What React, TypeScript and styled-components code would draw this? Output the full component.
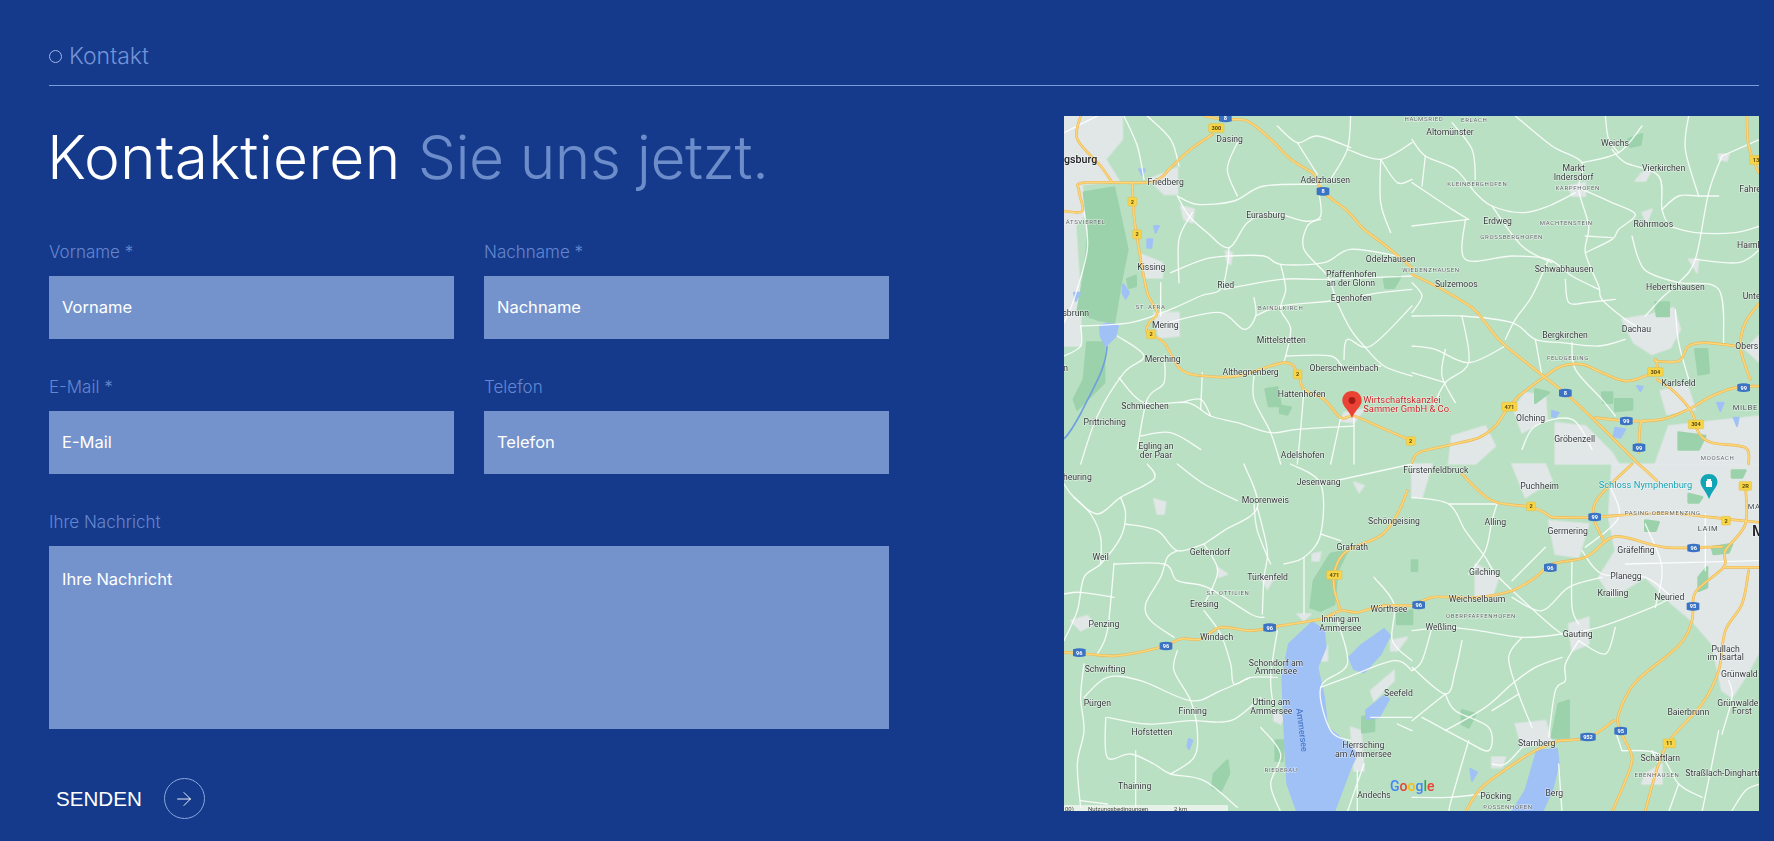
import React from 'react'
import styled, { createGlobalStyle } from 'styled-components'
import { ArrowRight } from 'lucide-react'

const GlobalStyle = createGlobalStyle`
  html, body {
    margin: 0;
    padding: 0;
    background: #153a8b;
    overflow: hidden;
  }
  * {
    box-sizing: border-box;
  }
`

const Page = styled.div`
  width: 1774px;
  height: 841px;
  padding: 37px 15px 0 49px;
  background: #153a8b;
  font-family: Inter, 'Liberation Sans', sans-serif;
`

const SectionHead = styled.div`
  display: flex;
  align-items: center;
  gap: 7px;
  height: 49px;
  padding-bottom: 10px;
  border-bottom: 1px solid #7d9cdb;
  color: #7393d6;
  font-size: 23px;
  font-weight: 300;
`

const Dot = styled.span`
  width: 13px;
  height: 13px;
  border: 1px solid #9db6e6;
  border-radius: 50%;
`

const Content = styled.div`
  display: flex;
  justify-content: space-between;
  margin-top: 30px;
`

const Form = styled.form`
  width: 840px;
`

const Title = styled.h1`
  margin: 0 0 36px -2px;
  padding-top: 5px;
  height: 88px;
  font-size: 60.5px;
  line-height: 72px;
  font-weight: 350;
  letter-spacing: 0.25px;
  color: #fff;
  white-space: nowrap;
  span {
    color: #6d8dca;
    letter-spacing: -0.6px;
  }
`

const Fields = styled.div`
  display: grid;
  grid-template-columns: 405px 405px;
  column-gap: 30px;
  row-gap: 36px;
`

const Field = styled.label<{ $wide?: boolean }>`
  display: block;
  grid-column: ${(p) => (p.$wide ? '1 / 3' : 'auto')};
`

const FieldLabel = styled.div`
  height: 24px;
  margin-bottom: 12px;
  color: #6587cf;
  font-size: 17px;
  font-weight: 300;
  line-height: 24px;
`

const Input = styled.input`
  display: block;
  width: 100%;
  height: 63px;
  padding: 0 13px 2px;
  border: 0;
  border-radius: 0;
  background: #7493cc;
  font-family: inherit;
  font-size: 16.5px;
  color: #fff;
  &::placeholder {
    color: #fff;
    opacity: 1;
  }
`

const TextArea = styled.textarea`
  display: block;
  width: 100%;
  height: 183px;
  padding: 21px 13px;
  border: 0;
  border-radius: 0;
  background: #7493cc;
  font-family: inherit;
  font-size: 16.5px;
  line-height: 24px;
  color: #fff;
  resize: none;
  &::placeholder {
    color: #fff;
    opacity: 1;
  }
`

const SendButton = styled.button`
  display: flex;
  align-items: center;
  gap: 22px;
  margin-top: 49px;
  padding: 0 0 0 7px;
  border: 0;
  background: none;
  color: #fff;
  font-family: 'Liberation Sans', sans-serif;
  font-size: 20.6px;
`

const ArrowCircle = styled.span`
  display: flex;
  align-items: center;
  justify-content: center;
  width: 41px;
  height: 41px;
  border: 1px solid #8aa6de;
  border-radius: 50%;
`

const MapFrame = styled.div`
  width: 695px;
  height: 695px;
  flex: none;
  overflow: hidden;
  background: #bae0c3;
`

const MapSvg = styled.svg`
  display: block;
  width: 695px;
  height: 695px;
  filter: blur(0.45px);
  font-family: Roboto, 'Liberation Sans', sans-serif;
`

const labelStyles: Record<string, { size: number; weight?: number; spacing?: number; fill: string; start?: boolean }> = {
  town: { size: 26, fill: '#33373a' },
  start: { size: 26, fill: '#33373a', start: true },
  area: { size: 18, spacing: 2, fill: '#5f6468' },
  district: { size: 23, spacing: 2, fill: '#4b5054' },
  districtStart: { size: 23, spacing: 2, fill: '#4b5054', start: true },
  poi: { size: 28, fill: '#c5221f', start: true },
  teal: { size: 28, fill: '#129eaf', start: true },
  big: { size: 32, weight: 500, fill: '#202124' },
  city: { size: 46, weight: 500, fill: '#202124' },
}

const Label = styled.text<{ $kind: string }>`
  font-size: ${(p) => labelStyles[p.$kind].size}px;
  font-weight: ${(p) => labelStyles[p.$kind].weight || 400};
  letter-spacing: ${(p) => labelStyles[p.$kind].spacing || 0}px;
  fill: ${(p) => labelStyles[p.$kind].fill};
  text-anchor: ${(p) => (labelStyles[p.$kind].start ? 'start' : 'middle')};
  paint-order: stroke;
  stroke: rgba(255, 255, 255, 0.65);
  stroke-width: 3px;
`

const ShieldText = styled.text`
  font-size: 17px;
  font-weight: 700;
  text-anchor: middle;
`

type LabelRow = [string, number, number, string?]
type ShieldRow = [string, number, number, 'y' | 'b']

interface Tile {
  ox: number
  oy: number
  urban: string[]
  forest: string[]
  water: string[]
  roads: string[]
  highways: string[]
  shields: ShieldRow[]
  labels: LabelRow[]
}

// coordinates are read off 3x crops of the map, one crop per quadrant
const tiles: Tile[] = [
  {
    ox: 0,
    oy: 0,
    urban: [
      '0,0 175,0 175,70 125,130 165,195 55,205 60,300 35,330 50,560 50,690 0,690',
      '255,190 340,155 340,235 300,235',
      '270,590 345,590 345,660 285,665',
      '230,415 295,440 295,485 245,485',
      '350,270 390,280 385,320 360,310',
      '485,405 505,410 500,445 490,440',
      '840,890 900,880 870,920 830,915',
    ],
    forest: [
      '60,230 150,215 190,400 170,500 150,620 100,610 40,590 60,480 75,340',
      '70,680 120,680 120,800 40,880 30,850 60,790',
      '605,820 640,815 650,870 615,870',
      '650,870 680,875 670,895 648,890',
      '960,490 1010,480 990,515 965,515',
      '190,490 215,480 215,510 195,515',
    ],
    water: [
      '108,630 130,622 162,630 155,660 125,690 110,660',
      '178,505 195,530 185,548 175,530',
      '270,330 285,330 275,350',
      '250,370 265,370 262,395 250,395',
      '225,160 242,160 235,178',
      '30,530 48,530 35,555',
    ],
    roads: [
      '180,0 220,90 240,190',
      '250,0 320,70 345,150',
      '340,240 400,265 510,255 600,210 770,205',
      '340,240 375,300 430,350 495,395 550,320 620,290 720,315 770,310',
      '495,395 490,450 470,520 410,540 320,580 200,620 50,630',
      '320,470 420,430 495,420 600,420 650,445 780,440 860,400 1000,420',
      '480,520 650,490 780,490 1044,480',
      '650,445 665,520 650,580 680,640 660,740',
      '570,545 575,600 540,640 470,590 350,610 280,630',
      '575,600 650,570 800,555 950,530 1044,520',
      '765,230 770,300 730,330 720,400 790,480 820,560 860,640 900,690 960,750 1044,780',
      '860,0 850,100 800,190',
      '950,130 1000,200 1044,190',
      '850,100 950,130 1044,80',
      '520,80 490,160 520,240',
      '950,130 950,260 980,350',
      '160,660 240,720 180,770 100,900 50,1044',
      '300,720 300,800 250,850 220,1000',
      '165,785 240,860 370,860 440,900 520,920 620,950 700,940 870,930',
      '350,860 410,850 440,900',
      '570,780 570,850 620,950 650,1044',
      '720,820 710,940 700,1044',
      '870,900 870,1044',
      '830,905 800,1044',
      '665,720 800,720 850,760 950,750',
      '840,730 850,670 920,690 1044,570',
      '0,720 50,690 50,630',
      '60,285 70,400 30,550 0,620',
      '415,770 410,880',
      '230,960 320,950 410,1000',
      '385,290 345,370 345,500',
      '290,500 290,600',
      '640,30 700,80 760,60 860,95',
      '700,80 760,175',
      '0,50 60,20 100,0',
    ],
    highways: [
      '420,0 480,10 550,15 620,70 680,130 750,175 775,225 850,285 900,340 960,385 1044,455',
      '445,55 380,100 320,155 290,185 240,200 60,200 45,225 55,285 0,285',
      '205,200 210,300 225,400 250,530 280,590 255,620 250,650 300,680 350,760 420,780 520,780 660,740 700,770 720,820 780,850 830,905 870,900 940,930 1044,975',
      '50,0 40,70 110,150 145,200',
    ],
    shields: [
      ['300', 457, 36, 'y'],
      ['8', 484, 6, 'b'],
      ['8', 777, 226, 'b'],
      ['2', 205, 257, 'y'],
      ['2', 219, 355, 'y'],
      ['2', 261, 655, 'y'],
      ['2', 701, 775, 'y'],
      ['2', 1040, 975, 'y'],
    ],
    labels: [
      ['gsburg', 50, 140, 'big'],
      ['Friedberg', 305, 207],
      ['Dasing', 497, 79],
      ['Adelzhausen', 784, 202],
      ['Eurasburg', 605, 305],
      ['ÄTSVIERTEL', 65, 325, 'area'],
      ['Kissing', 262, 461],
      ['Ried', 485, 517],
      ['Odelzhausen', 980, 437],
      ['Pfaffenhofen', 862, 483],
      ['an der Glonn', 860, 509],
      ['Egenhofen', 862, 554],
      ['BAINDLKIRCH', 650, 581, 'area'],
      ['ST. AFRA', 260, 578, 'area'],
      ['sbrunn', 35, 600],
      ['Mering', 304, 637],
      ['Mittelstetten', 652, 680],
      ['Merching', 296, 738],
      ['Althegnenberg', 560, 778],
      ['Oberschweinbach', 840, 766],
      ['Hattenhofen', 713, 842],
      ['Schmiechen', 243, 879],
      ['Prittriching', 122, 927],
      ['Egling an', 276, 999],
      ['der Paar', 276, 1025],
      ['Adelshofen', 716, 1027],
      ['n', 5, 764],
      ['Wirtschaftskanzlei', 898, 860, 'poi'],
      ['Sammer GmbH & Co.', 898, 889, 'poi'],
    ],
  },
  {
    ox: 348,
    oy: 0,
    urban: [
      '630,610 720,595 785,575 805,640 775,695 720,715 665,680',
      '745,825 825,805 850,880 765,895',
      '770,930 1044,900 1044,1044 730,1044',
      '305,880 340,830 400,840 405,910 330,950',
      '430,920 520,930 600,1010 620,1044 430,1044',
      '120,960 220,930 250,990 190,1044 110,1044',
      '690,170 720,160 700,195 670,195',
      '690,290 720,280 705,320',
      '920,115 950,115 945,135 920,130',
      '830,430 860,430 855,470',
      '470,210 520,200 520,240 480,240',
      '1040,660 1044,740 1000,700',
    ],
    forest: [
      '650,70 690,55 685,85 655,92',
      '850,700 885,700 890,770 860,775',
      '730,560 770,560 770,600 735,600',
      '570,830 600,830 600,860 575,860',
      '610,850 660,850 660,880 610,885',
      '370,820 410,830 370,860',
      '800,950 880,960 860,1000 800,1000',
    ],
    water: [
      '420,885 440,890 430,905 420,900',
      '610,935 640,940 625,965 605,960',
      '915,860 935,860 925,885',
      '965,905 980,905 975,930',
      '675,810 692,812 685,825',
    ],
    roads: [
      '0,70 40,120 130,160 190,230 240,270 330,290 410,270 490,230',
      '40,120 30,210',
      '0,200 60,240 120,280 170,310',
      '170,310 0,330',
      '120,20 180,100 190,190',
      '310,0 420,90 510,140 500,220 530,330 520,410 560,510 570,550 640,610 690,640',
      '690,30 620,110 510,140',
      '600,100 640,140 740,180 750,280 770,330',
      '830,0 820,100 860,240',
      '930,120 1044,70',
      '930,120 890,230 850,430 800,500 750,545 700,600',
      '510,220 600,260 670,295 620,340 600,370 520,410',
      '160,310 160,430 300,420 410,430 480,480 560,520',
      '240,270 330,390 420,440',
      '410,430 360,540 310,610 280,670',
      '460,490 470,560 520,560',
      '520,560 610,550',
      '660,360 680,430 710,470 800,500 920,520 935,680',
      '850,430 980,440 1044,400',
      '0,600 150,600 300,620 370,670 450,680 560,690 640,670',
      '150,600 170,740 100,800 60,880',
      '0,690 70,700 170,740 280,690',
      '370,670 390,780',
      '480,680 490,760 570,850 610,900',
      '100,700 90,780 130,860',
      '770,330 850,350 970,350 1044,330',
      '0,500 30,540 0,590',
      '580,0 590,70 620,110',
      '750,280 800,240 860,240 920,240',
      '790,580 800,680 830,790',
      '0,770 100,800',
      '520,360 600,365',
      '540,1000 480,910 370,930 330,1000',
    ],
    highways: [
      '0,475 90,520 180,575 220,620 270,680 400,785 470,840 550,915 680,1044',
      '320,840 400,780 450,750 510,745 570,770 640,795 700,780 735,755 730,730',
      '730,735 800,735 830,690 880,680 970,690',
      '0,1040 20,1010 100,990 200,965 250,930 285,880 320,840',
      '550,905 650,915 750,910 830,880 900,840 970,815 1044,810',
      '680,1010 685,925 700,915',
      '735,790 790,830 840,890 860,950 900,980 1000,995 1010,1044',
      '1005,0 1010,90 1040,170',
      '1044,560 1000,620 985,690 1000,750 1015,790',
    ],
    shields: [
      ['13', 1032, 132, 'y'],
      ['8', 460, 831, 'b'],
      ['471', 292, 872, 'y'],
      ['304', 730, 768, 'y'],
      ['304', 852, 925, 'y'],
      ['99', 995, 815, 'b'],
      ['99', 643, 915, 'b'],
      ['99', 681, 995, 'b'],
    ],
    labels: [
      ['HALMSRIED', 36, 14, 'area'],
      ['ERLACH', 187, 18, 'area'],
      ['Altomünster', 114, 58],
      ['Weichs', 609, 91],
      ['Markt', 485, 165],
      ['Indersdorf', 485, 191],
      ['Vierkirchen', 755, 165],
      ['KLEINBERGHOFEN', 196, 211, 'area'],
      ['KARPFHOFEN', 497, 223, 'area'],
      ['Fahre', 982, 227, 'start'],
      ['Erdweg', 257, 323],
      ['MACHTENSTEIN', 463, 327, 'area'],
      ['Röhrmoos', 724, 332],
      ['GROSSBERGHOFEN', 299, 370, 'area'],
      ['Haiml', 975, 395, 'start'],
      ['Schwabhausen', 456, 467],
      ['WIEDENZHAUSEN', 57, 469, 'area'],
      ['Sulzemoos', 133, 513],
      ['Hebertshausen', 790, 522],
      ['Unte', 992, 549, 'start'],
      ['Dachau', 673, 648],
      ['Bergkirchen', 459, 667],
      ['Obers', 970, 699, 'start'],
      ['FELDGEDING', 468, 733, 'area'],
      ['Karlsfeld', 800, 809],
      ['Olching', 356, 914],
      ['MILBE', 962, 883, 'districtStart'],
      ['Gröbenzell', 488, 978],
      ['MOOSACH', 917, 1032, 'area'],
    ],
  },
  {
    ox: 0,
    oy: 348,
    urban: [
      '20,470 70,455 90,480 50,500',
      '270,105 305,115 300,150 280,150',
      '870,55 900,65 885,85',
      '745,270 770,265 765,290 745,290',
      '460,310 490,330 465,340',
      '590,340 630,340 610,375',
      '700,450 740,450 720,470',
      '770,560 790,545 790,590 765,590',
      '920,680 990,620 990,650 930,710',
      '980,530 1030,520 1000,560 980,560',
      '860,790 890,800 900,920 870,920',
      '630,740 660,760 650,780 630,770',
    ],
    forest: [
      '800,270 850,260 820,320 810,420 770,440 740,430 750,350',
      '450,930 490,890 495,930 470,980 445,970',
      '1000,450 1044,440 1044,480 1000,480',
      '895,760 930,750 930,800 895,805',
      '635,830 660,830 655,890 635,890',
    ],
    water: [
      '745,475 780,500 785,550 760,610 780,700 790,790 840,830 880,870 860,910 810,1044 700,1044 670,960 660,770 655,640 675,540',
      '960,495 978,515 950,570 900,625 870,615 855,580 890,545',
      '960,695 975,705 945,760 910,765 905,740',
      '375,825 385,830 375,855 370,845',
    ],
    roads: [
      '250,0 270,45 170,100 100,150 30,100 0,60',
      '170,100 185,150 170,220 110,300 60,340 40,440 0,530',
      '30,100 80,150 110,220 110,300',
      '185,180 280,200 340,260 420,240',
      '540,0 580,130 480,200 420,240',
      '580,130 610,260 600,340 595,450',
      '420,240 460,310 450,360 420,420',
      '340,260 310,280 290,340 245,420 260,470 330,520',
      '150,300 300,300 340,350 430,370 560,450 600,460',
      '150,300 130,500 100,570',
      '0,390 50,385 150,400',
      '420,440 470,510 500,600 510,660 560,640 640,640',
      '340,560 330,620 380,710 400,800 390,880 320,930',
      '60,600 50,700 60,800 40,900 50,1030',
      '60,700 130,640 230,650 380,710 470,680 560,640',
      '130,760 250,780 380,770 500,770 590,700',
      '125,760 130,880 200,870 270,900 320,930 420,950 520,1030',
      '215,860 215,1030',
      '590,790 650,870 620,960 650,1044',
      '680,0 770,60 770,210 720,280 660,300',
      '570,120 580,200 620,300',
      '340,0 420,60 520,110',
      '770,60 1044,0',
      '770,210 830,230',
      '720,280 720,450',
      '820,470 850,600 770,670 800,800 860,830',
      '770,670 850,640 990,590 1044,620',
      '930,340 990,420 985,530 1044,590',
      '920,760 1044,760',
      '880,920 880,1040',
      '850,1044 900,900',
      '1000,780 1044,800',
      '640,500 620,640 630,740',
      '50,1010 130,1020',
    ],
    highways: [
      '0,565 70,570 160,575 290,550 350,525 410,525 470,490 560,500 650,485 770,465 830,440 880,445 960,425 1044,425',
      '1030,80 1000,150 950,215 850,260 815,310 810,370 828,435',
    ],
    shields: [
      ['96', 46, 566, 'b'],
      ['96', 306, 546, 'b'],
      ['96', 617, 491, 'b'],
      ['471', 811, 333, 'y'],
    ],
    labels: [
      ['heuring', 40, 49],
      ['Jesenwang', 764, 62],
      ['Moorenweis', 604, 116],
      ['Schöngeising', 912, 179, 'start'],
      ['Grafrath', 865, 258],
      ['Geltendorf', 438, 274],
      ['Weil', 110, 289],
      ['Türkenfeld', 611, 349],
      ['ST. OTTILIEN', 492, 392, 'area'],
      ['Eresing', 421, 428],
      ['Penzing', 120, 490],
      ['Windach', 458, 529],
      ['Wörthsee', 975, 445],
      ['Inning am', 829, 475],
      ['Ammersee', 829, 500],
      ['Schondorf am', 636, 605],
      ['Ammersee', 636, 631],
      ['Schwifting', 123, 624],
      ['Utting am', 622, 723],
      ['Ammersee', 622, 749],
      ['Pürgen', 100, 726],
      ['Finning', 386, 750],
      ['Hofstetten', 264, 812],
      ['Herrsching', 898, 853],
      ['am Ammersee', 898, 879],
      ['RIEDERAU', 651, 925, 'area'],
      ['Thaining', 212, 976],
      ['Andechs', 930, 1002],
      ['Seefeld', 960, 696, 'start'],
      ['Fürstenfeldbruck', 1018, 26, 'start'],
    ],
  },
  {
    ox: 348,
    oy: 348,
    urban: [
      '600,0 1044,0 1044,560 1000,640 960,700 930,680 900,540 840,470 780,420 700,340 600,400 560,340 610,260 590,160',
      '300,0 400,0 420,50 340,100',
      '410,170 530,180 500,280 430,270',
      '190,300 260,340 240,400 190,400',
      '470,480 530,460 530,540 480,560',
      '0,0 60,0 30,100 0,100',
      '310,780 400,770 420,830 330,850',
      '240,880 280,880 270,910 240,910',
      '700,930 750,900 750,960 690,960',
    ],
    forest: [
      '440,720 470,710 470,820 420,820',
      '150,740 190,750 170,790 150,780',
      '0,290 15,290 15,320 0,320',
      '860,340 885,310 885,370 860,380',
      '830,90 870,100 860,115 830,115',
      '900,250 960,240 950,265 905,270',
      '700,170 740,175 730,200 700,200',
      '960,20 1000,20 990,40 960,40',
    ],
    water: [
      '375,860 435,855 440,900 420,980 390,1044 300,1044 340,980',
      '175,915 195,925 180,950',
    ],
    roads: [
      '0,100 110,120 160,200 220,280 260,340 400,470 450,510',
      '110,120 250,120',
      '255,120 240,170 220,260 170,330',
      '0,500 100,490 200,500 330,520 450,510 560,490 720,430 780,400',
      '300,400 390,440 470,370 570,340',
      '480,290 480,430 500,480',
      '400,250 300,350',
      '510,260 570,330 700,340 780,400',
      '500,530 580,570 610,490',
      '330,520 290,580 320,690 360,790',
      '500,530 460,600 460,650 430,680 410,820',
      '450,580 370,610 300,660 220,730 100,800',
      '150,530 130,620 100,690 0,610',
      '100,690 130,740 230,790 230,860 160,830 30,760',
      '100,690 0,770',
      '60,490 30,590 0,620',
      '320,690 240,740',
      '170,830 120,1000 110,1044',
      '330,850 280,900 240,900',
      '630,860 740,870 800,960 870,1000',
      '800,960 770,1044',
      '920,800 900,900 870,1044',
      '950,650 960,700 930,810',
      '720,860 740,900',
      '610,800 630,860',
      '440,900 450,1044',
      '0,1000 110,1000 210,990',
      '640,300 1044,290',
      '700,180 750,310 730,430',
      '880,150 880,320',
      '960,1040 1000,980 1044,960',
      '590,60 620,160 520,250',
    ],
    highways: [
      '0,425 60,400 120,400 200,400 300,380 370,340 420,300 520,280 590,225 640,220 760,250 930,248',
      '660,0 560,100 545,160 575,230',
      '735,50 680,0',
      '420,160 540,160 680,150 800,150 940,165 1044,175',
      '150,30 240,110 360,130 420,160',
      '1000,60 1000,180 940,260 935,310 850,385 840,470 800,545 670,655 620,750 625,800 660,880 640,950 600,1044',
      '440,830 530,820 605,770',
      '160,1044 210,970 320,890 370,860 440,830',
      '935,310 1044,310',
      '1010,320 990,420 940,500 920,620 870,720 780,820 740,900 700,1040',
    ],
    shields: [
      ['96', 20, 423, 'b'],
      ['96', 415, 311, 'b'],
      ['96', 845, 252, 'b'],
      ['99', 548, 159, 'b'],
      ['95', 843, 427, 'b'],
      ['952', 528, 819, 'b'],
      ['95', 626, 801, 'b'],
      ['2', 357, 127, 'y'],
      ['2', 942, 170, 'y'],
      ['2R', 1000, 66, 'y'],
      ['11', 772, 838, 'y'],
    ],
    labels: [
      ['Puchheim', 383, 76],
      ['Schloss Nymphenburg', 560, 71, 'teal'],
      ['Alling', 250, 182],
      ['Germering', 467, 209],
      ['PASING-OBERMENZING', 752, 152, 'area'],
      ['LAIM', 888, 200, 'district'],
      ['MA', 1007, 136, 'districtStart'],
      ['M', 1040, 215, 'city'],
      ['Gräfelfing', 672, 268],
      ['Gilching', 218, 332],
      ['Planegg', 642, 344],
      ['Krailling', 603, 397],
      ['Neuried', 772, 407],
      ['Weichselbaum', 195, 413],
      ['OBERPFAFFENHOFEN', 207, 463, 'area'],
      ['Weßling', 87, 497],
      ['Gauting', 497, 519],
      ['Pullach', 941, 563],
      ['im Isartal', 941, 589],
      ['Grünwald', 982, 639],
      ['Grünwalder', 982, 725],
      ['Forst', 990, 750],
      ['Baierbrunn', 829, 752],
      ['Starnberg', 374, 847],
      ['Schäftlarn', 745, 892],
      ['EBENHAUSEN', 735, 940, 'area'],
      ['Straßlach-Dinghartin', 820, 935, 'start'],
      ['Pöcking', 251, 1005],
      ['Berg', 427, 996],
      ['POSSENHOFEN', 288, 1035, 'area'],
    ],
  },
]

// Catmull-Rom through the points, so the roads don't look like polylines
const smooth = (line: string) => {
  const pts = line.split(' ').map((p) => p.split(',').map(Number))
  let d = `M${pts[0][0]} ${pts[0][1]}`
  for (let i = 0; i < pts.length - 1; i++) {
    const a = pts[i - 1] || pts[i]
    const b = pts[i]
    const c = pts[i + 1]
    const e = pts[i + 2] || c
    d += `C${b[0] + (c[0] - a[0]) / 6} ${b[1] + (c[1] - a[1]) / 6} ${c[0] - (e[0] - b[0]) / 6} ${c[1] - (e[1] - b[1]) / 6} ${c[0]} ${c[1]}`
  }
  return d
}

const Layer = ({ draw }: { draw: (tile: Tile) => React.ReactNode }) => (
  <>
    {tiles.map((tile) => (
      <g key={`${tile.ox}-${tile.oy}`} transform={`translate(${tile.ox} ${tile.oy}) scale(${1 / 3})`}>
        {draw(tile)}
      </g>
    ))}
  </>
)

const Shield = ({ row }: { row: ShieldRow }) => {
  const [text, x, y, type] = row
  const w = text.length > 2 ? 46 : text.length > 1 ? 38 : type === 'y' ? 26 : 38
  const h = 26
  return (
    <g>
      {type === 'y' ? (
        <rect x={x - w / 2} y={y - h / 2} width={w} height={h} rx={3} fill="#f7d548" stroke="#e6b93c" strokeWidth={1.5} />
      ) : (
        <path
          d={`M${x - w / 2} ${y - h / 2 + 3}Q${x} ${y - h / 2 - 3} ${x + w / 2} ${y - h / 2 + 3}V${y + h / 2 - 3}Q${x} ${y + h / 2 + 3} ${x - w / 2} ${y + h / 2 - 3}Z`}
          fill="#3a72c4"
        />
      )}
      <ShieldText x={x} y={y + 6} fill={type === 'y' ? '#5b4a10' : '#fff'}>
        {text}
      </ShieldText>
    </g>
  )
}

const ContactMap = () => (
  <MapSvg viewBox="0 0 695 695">
    <rect width="695" height="695" fill="#bae0c3" />
    <Layer draw={(t) => t.urban.map((p) => <polygon key={p} points={p} fill="#e5e8eb" fillOpacity={0.9} strokeLinejoin="round" stroke="#e5e8eb" strokeOpacity={0.5} strokeWidth={8} />)} />
    <Layer draw={(t) => t.forest.map((p) => <polygon key={p} points={p} fill="#9bd2ab" strokeLinejoin="round" stroke="#9bd2ab" strokeWidth={8} />)} />
    <path d="M43 230C42 253 30 270 17 297C10 310 5 318 0 323" fill="none" stroke="#6f9fe0" strokeWidth={1.6} />
    <Layer draw={(t) => t.water.map((p) => <polygon key={p} points={p} fill="#a0c1f6" strokeLinejoin="round" stroke="#a0c1f6" strokeWidth={6} />)} />
    <Layer draw={(t) => t.roads.map((r) => <path key={r} d={smooth(r)} fill="none" stroke="#fff" strokeOpacity={0.85} strokeWidth={4} strokeLinecap="round" />)} />
    <Layer draw={(t) => t.highways.map((r) => <path key={r} d={smooth(r)} fill="none" stroke="#ecb655" strokeWidth={8} strokeLinecap="round" />)} />
    <Layer draw={(t) => t.highways.map((r) => <path key={r} d={smooth(r)} fill="none" stroke="#fcd779" strokeWidth={4.5} strokeLinecap="round" />)} />
    <Layer draw={(t) => t.shields.map((s) => <Shield key={`${s[0]}-${s[1]}-${s[2]}`} row={s} />)} />
    <Layer
      draw={(t) =>
        t.labels.map(([text, x, y, kind]) => (
          <Label key={`${text}-${x}`} x={x} y={y} $kind={kind || 'town'}>
            {text}
          </Label>
        ))
      }
    />
    {/* lake name, teal pin, red pin, Google mark, terms strip */}
    <text x="238" y="614" fontSize="9" fill="#3f6fc4" transform="rotate(83 238 614)" textAnchor="middle" dy="3">
      Ammersee
    </text>
    <path d="M645 358c-5 0-8.500 3.500-8.500 8 0 5 5 8 8.500 17 3.500-9 8.500-12 8.500-17 0-4.500-3.500-8-8.500-8z" fill="#12a5b5" />
    <path d="M642 365h6v6h-6zM643 363h4v2h-4z" fill="#fff" />
    <path d="M288 275c-5.700 0-9.700 4.200-9.700 9.500 0 6.200 6.200 8.700 9.700 17.500 3.500-8.800 9.700-11.300 9.700-17.500 0-5.300-4-9.500-9.700-9.500z" fill="#ea4335" />
    <circle cx="288" cy="284.500" r="3.400" fill="#a51c15" />
    <text x="326" y="675" fontSize="14" fontWeight="500">
      <tspan fill="#4285f4">G</tspan>
      <tspan fill="#ea4335">o</tspan>
      <tspan fill="#fbbc05">o</tspan>
      <tspan fill="#4285f4">g</tspan>
      <tspan fill="#34a853">l</tspan>
      <tspan fill="#ea4335">e</tspan>
    </text>
    <rect x="0" y="689" width="164" height="6" fill="#f4f8f4" fillOpacity={0.75} />
    <text x="1" y="694.500" fontSize="6" fill="#444">
      00)
    </text>
    <text x="24" y="694.500" fontSize="6" fill="#444">
      Nutzungsbedingungen
    </text>
    <text x="110" y="694.500" fontSize="6" fill="#444">
      2 km
    </text>
  </MapSvg>
)

const fields = [
  { name: 'Vorname', label: 'Vorname *' },
  { name: 'Nachname', label: 'Nachname *' },
  { name: 'E-Mail', label: 'E-Mail *' },
  { name: 'Telefon', label: 'Telefon' },
]

const App = () => (
  <Page>
    <GlobalStyle />
    <SectionHead>
      <Dot />
      Kontakt
    </SectionHead>
    <Content>
      <Form onSubmit={(e) => e.preventDefault()}>
        <Title>
          Kontaktieren <span>Sie uns jetzt.</span>
        </Title>
        <Fields>
          {fields.map((f) => (
            <Field key={f.name}>
              <FieldLabel>{f.label}</FieldLabel>
              <Input placeholder={f.name} />
            </Field>
          ))}
          <Field $wide>
            <FieldLabel>Ihre Nachricht</FieldLabel>
            <TextArea placeholder="Ihre Nachricht" />
          </Field>
        </Fields>
        <SendButton type="submit">
          SENDEN
          <ArrowCircle>
            <ArrowRight size={22} strokeWidth={1} color="#fff" />
          </ArrowCircle>
        </SendButton>
      </Form>
      <MapFrame>
        <ContactMap />
      </MapFrame>
    </Content>
  </Page>
)

export default App
